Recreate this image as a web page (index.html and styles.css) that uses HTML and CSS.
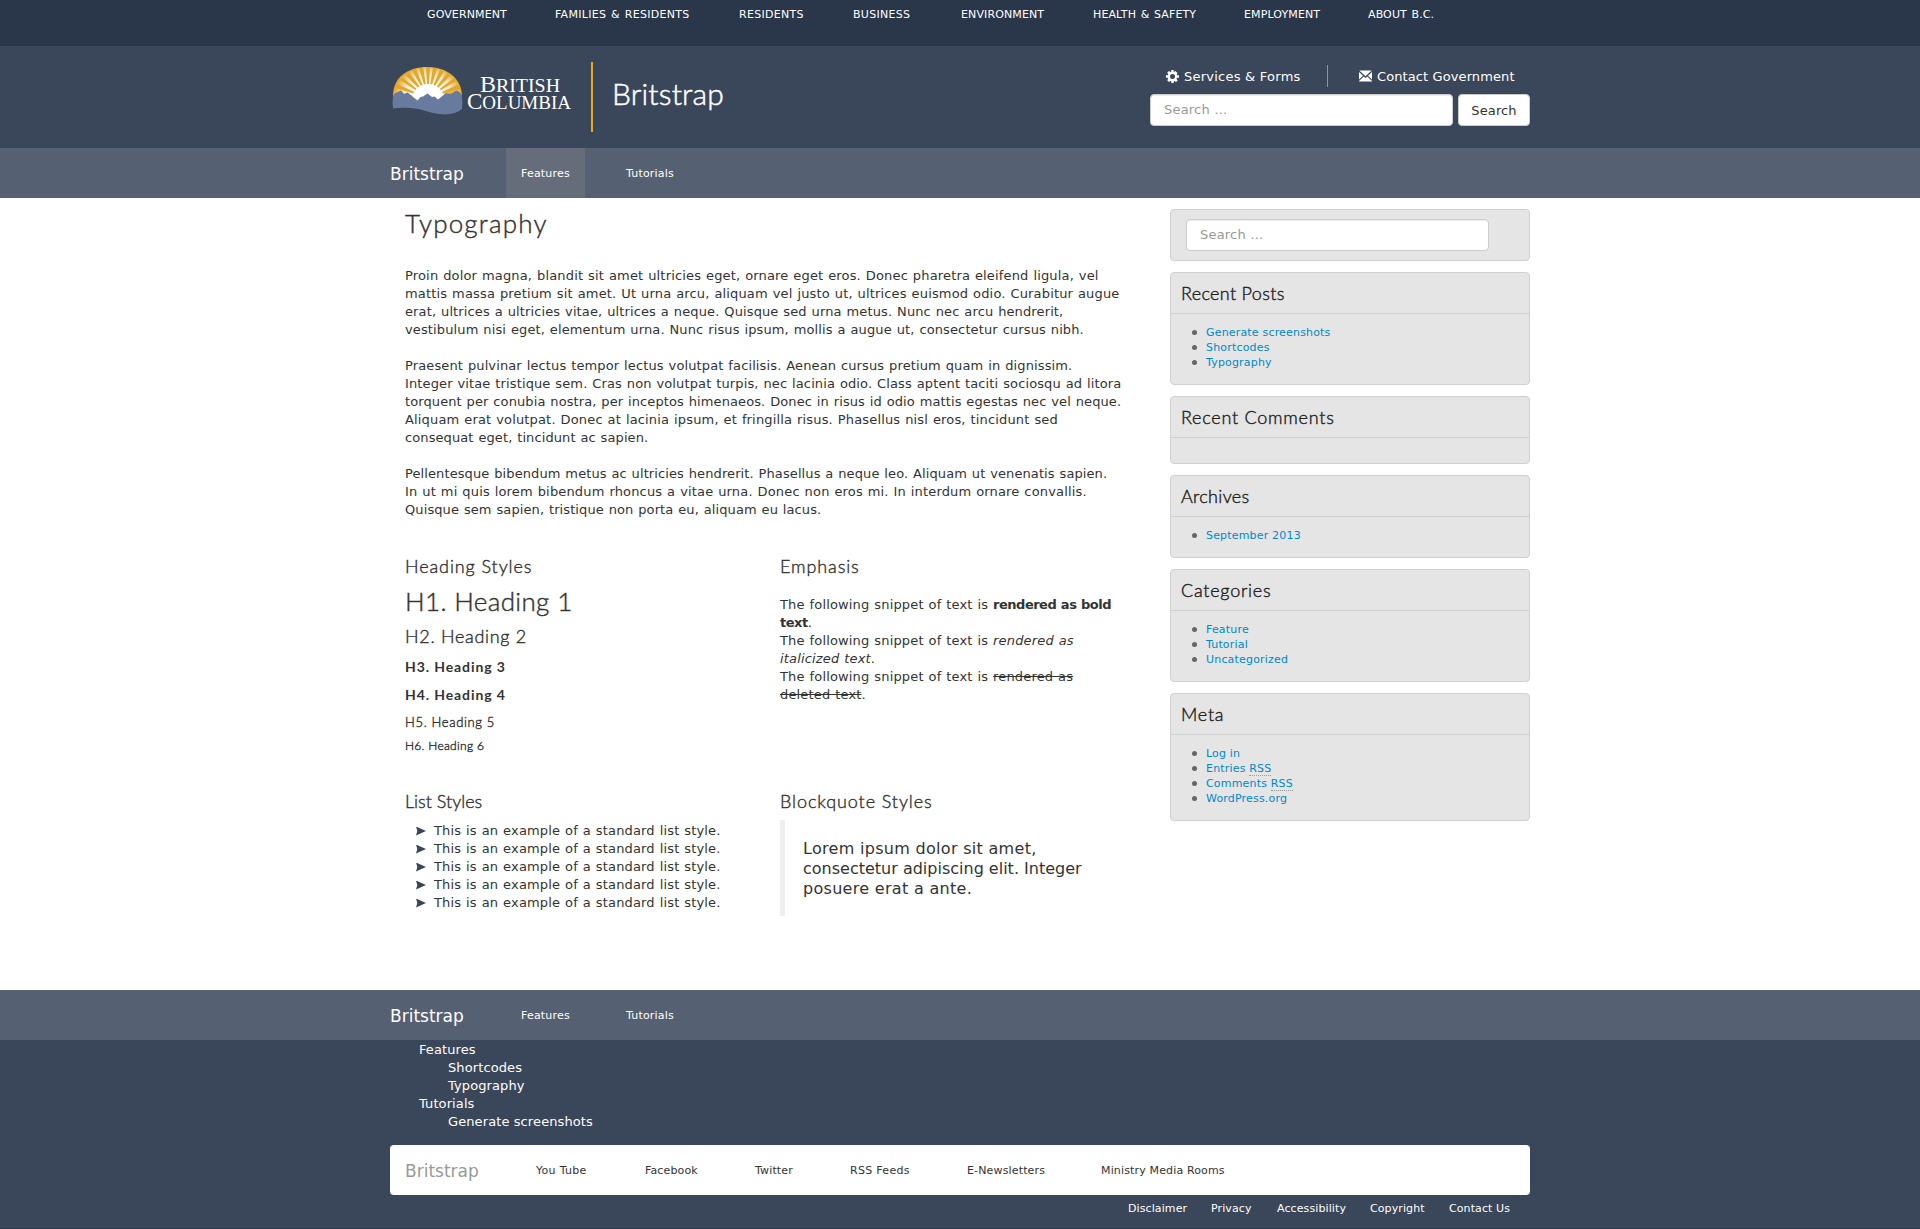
FILE: index.html
```html
<!DOCTYPE html>
<html lang="en">
<head>
<meta charset="utf-8">
<title>Typography | Britstrap</title>
<link rel="stylesheet" href="styles.css">
</head>
<body>
<nav class="topbar">
  <div class="container topbar-links">
    <a>GOVERNMENT</a><a class="loose">FAMILIES &amp; RESIDENTS</a><a class="loose">RESIDENTS</a><a class="loose">BUSINESS</a><a>ENVIRONMENT</a><a>HEALTH &amp; SAFETY</a><a>EMPLOYMENT</a><a>ABOUT B.C.</a>
  </div>
</nav>

<header class="header">
  <div class="container header-inner">
    <svg class="logo" width="184" height="54" viewBox="0 0 184 54" aria-label="British Columbia">
      <defs>
        <radialGradient id="glow" gradientUnits="userSpaceOnUse" cx="38" cy="36" r="33">
          <stop offset=".45" stop-color="#fff"/>
          <stop offset=".75" stop-color="#fff" stop-opacity=".7"/>
          <stop offset="1" stop-color="#fff" stop-opacity=".1"/>
        </radialGradient>
      </defs>
      <path d="M3 34C3 15 18 5 37.500 5S71 16 72 33L60 38H15Z" fill="#e3a82b"/>
      <g fill="url(#glow)">
        <path d="M38 36L4 31L5.500 26ZM38 36L7 22L10 18ZM38 36L12 15L15 12.500ZM38 36L19 10L22 8.500ZM38 36L26 7L29 6ZM38 36L33 5L36 5ZM38 36L40 5L43 5.500ZM38 36L47 6.500L50 7.500ZM38 36L54 9L57 11ZM38 36L61 13L64 16ZM38 36L66 19L68.500 22.500ZM38 36L70 27L71.500 31Z"/>
        <path d="M22 37A16 15 0 0 1 54 37L44 40H28Z" fill="#fff"/>
      </g>
      <path d="M3 34L5.500 31L8 30L11 28.500L14 32L17.500 30.500L27.500 38.500L30.500 35L33 34.500L37.500 31.500L42 35L44.500 34.500L48 37.500L56 31L61 31.500L66 28.500L68 29L71.500 32Q73 40 72 47Q64 54 49 52Q41 51 34 48.500Q21 44.500 3 46.500Q2 40 3 34Z" fill="#687a9e"/>
      <path d="M56 31L59.500 32L63 31L66 28.500L62 29.500Z" fill="#e3a82b"/>
      <g class="logo-text" fill="#fff">
        <text x="90" y="29.500" textLength="80" lengthAdjust="spacingAndGlyphs"><tspan class="cap">B</tspan>RITISH</text>
        <text x="77" y="47" textLength="104" lengthAdjust="spacingAndGlyphs"><tspan class="cap">C</tspan>OLUMBIA</text>
      </g>
    </svg>
    <div class="site-title">Britstrap</div>
    <div class="header-tools">
      <div class="quick">
        <a class="quick-services"><svg width="13" height="13" viewBox="0 0 13 13"><g fill="#fff"><path fill-rule="evenodd" d="M5.300 0H7.700V2.200L9.300 .9L11.500 3L10.800 4.300L11 5.300H13V7.700H11L10.500 8.900L11.700 10.400L10 12L8.600 11L7.700 11.300V13H5.300V11.300L4.300 11L3 12L1.200 10.300L2.200 8.800L1.900 7.700H0V5.300H1.900L2.200 4.200L1.200 2.700L3 1L4.400 2L5.300 1.700ZM6.500 4A2.500 2.500 0 1 0 6.500 9A2.500 2.500 0 1 0 6.500 4Z"/></g></svg>Services &amp; Forms</a>
        <a class="quick-contact"><svg width="13" height="12" viewBox="0 0 13 12"><path fill="#fff" d="M.3 .5H12.700L6.500 6.300ZM0 2L4 5.700L0 9.500ZM13 2L9 5.700L13 9.500ZM0 11.500V11L4.700 6.400L6.500 8L8.300 6.400L13 11V11.500Z"/></svg>Contact Government</a>
      </div>
      <form class="header-search">
        <input class="field" type="text" placeholder="Search …">
        <button class="btn" type="button">Search</button>
      </form>
    </div>
  </div>
</header>

<nav class="navbar">
  <div class="container navbar-inner">
    <a class="brand">Britstrap</a><a class="tab active">Features</a><a class="tab">Tutorials</a>
  </div>
</nav>

<div class="container page">
  <main class="content">
    <h1 class="title">Typography</h1>
    <p class="copy wide">Proin dolor magna, blandit sit amet ultricies eget, ornare eget eros. Donec pharetra eleifend ligula, vel<br>mattis massa pretium sit amet. Ut urna arcu, aliquam vel justo ut, ultrices euismod odio. Curabitur augue<br><span class="close">erat, ultrices a ultricies vitae, ultrices a neque. Quisque sed urna metus. Nunc nec arcu hendrerit,<br>vestibulum nisi eget, elementum urna. Nunc risus ipsum, mollis a augue ut, consectetur cursus nibh.</span></p>
    <p class="copy wide"><span class="close">Praesent pulvinar lectus tempor lectus volutpat facilisis. Aenean cursus pretium quam in dignissim.<br>Integer vitae tristique sem. Cras non volutpat turpis, nec lacinia odio. Class aptent taciti sociosqu ad litora</span><br><span class="closer">torquent per conubia nostra, per inceptos himenaeos. Donec in risus id odio mattis egestas nec vel neque.</span><br>Aliquam erat volutpat. Donec at lacinia ipsum, et fringilla risus. Phasellus nisl eros, tincidunt sed<br><span class="closer">consequat eget, tincidunt ac sapien.</span></p>
    <p class="copy wide"><span class="closer">Pellentesque bibendum metus ac ultricies hendrerit. Phasellus a neque leo. Aliquam ut venenatis sapien.</span><br>In ut mi quis lorem bibendum rhoncus a vitae urna. Donec non eros mi. In interdum ornare convallis.<br><span class="closer">Quisque sem sapien, tristique non porta eu, aliquam eu lacus.</span></p>

    <div class="samples">
      <section class="headings">
        <h2 class="h2">Heading Styles</h2>
        <h1 class="h1">H1. Heading 1</h1>
        <h2 class="h2 second">H2. Heading 2</h2>
        <h3 class="h3">H3. Heading 3</h3>
        <h4 class="h3">H4. Heading 4</h4>
        <h5 class="h5">H5. Heading 5</h5>
        <h6 class="h6">H6. Heading 6</h6>
      </section>
      <section>
        <h2 class="h2">Emphasis</h2>
        <p class="copy emphasis">The following snippet of text is <b>rendered as bold<br>text</b>.<br>The following snippet of text is <em>rendered as<br>italicized text</em>.<br>The following snippet of text is <del>rendered as<br>deleted text</del>.</p>
      </section>
      <section>
        <h2 class="h2 snug">List Styles</h2>
        <ul class="arrows copy">
          <li>This is an example of a standard list style.</li>
          <li>This is an example of a standard list style.</li>
          <li>This is an example of a standard list style.</li>
          <li>This is an example of a standard list style.</li>
          <li>This is an example of a standard list style.</li>
        </ul>
      </section>
      <section>
        <h2 class="h2">Blockquote Styles</h2>
        <blockquote class="quote"><span class="loose">Lorem ipsum dolor sit amet,</span><br>consectetur adipiscing elit. Integer<br><span class="loose">posuere erat a ante.</span></blockquote>
      </section>
    </div>
  </main>

  <aside class="sidebar">
    <div class="widget widget-search"><input class="field" type="text" placeholder="Search …"></div>
    <div class="widget">
      <h3 class="widget-title tight">Recent Posts</h3>
      <ul class="links"><li><a>Generate screenshots</a></li><li><a>Shortcodes</a></li><li><a>Typography</a></li></ul>
    </div>
    <div class="widget">
      <h3 class="widget-title">Recent Comments</h3>
      <ul class="links"></ul>
    </div>
    <div class="widget">
      <h3 class="widget-title tight">Archives</h3>
      <ul class="links"><li><a>September 2013</a></li></ul>
    </div>
    <div class="widget">
      <h3 class="widget-title">Categories</h3>
      <ul class="links"><li><a>Feature</a></li><li><a>Tutorial</a></li><li><a>Uncategorized</a></li></ul>
    </div>
    <div class="widget">
      <h3 class="widget-title">Meta</h3>
      <ul class="links"><li><a>Log in</a></li><li><a>Entries <abbr>RSS</abbr></a></li><li><a>Comments <abbr>RSS</abbr></a></li><li><a>WordPress.org</a></li></ul>
    </div>
  </aside>
</div>

<footer class="footer">
  <nav class="navbar">
    <div class="container navbar-inner">
      <a class="brand">Britstrap</a><a class="tab">Features</a><a class="tab">Tutorials</a>
    </div>
  </nav>
  <div class="container">
    <ul class="sitemap">
      <li>Features<ul><li>Shortcodes</li><li>Typography</li></ul></li>
      <li>Tutorials<ul><li>Generate screenshots</li></ul></li>
    </ul>
    <div class="social">
      <a class="brand">Britstrap</a><a class="loose">You Tube</a><a>Facebook</a><a>Twitter</a><a class="loose">RSS Feeds</a><a>E-Newsletters</a><a>Ministry Media Rooms</a>
    </div>
    <div class="legal"><a>Disclaimer</a><a>Privacy</a><a>Accessibility</a><a>Copyright</a><a>Contact Us</a></div>
  </div>
</footer>
</body>
</html>
```
FILE: styles.css
```css
* { box-sizing: border-box; }
body {
  margin: 0;
  background: #fff;
  color: #333;
  font: 13px/18px "DejaVu Sans", sans-serif;
}
h1, h2, h3, h4, h5, h6, p, ul, blockquote { margin: 0; padding: 0; }
ul { list-style: none; }
.container { width: 1140px; margin: 0 auto; }

.topbar { height: 46px; background: #2a3649; color: #fff; }
.topbar-links {
  display: grid;
  grid-template-columns: 128px 184px 114px 108px 132px 151px 124px 100px;
  padding: 6px 0 0 37px;
  font-size: 11px;
  letter-spacing: .12px;
  word-spacing: 1px;
  white-space: nowrap;
}
.loose { letter-spacing: .3px; }

.header { height: 102px; background: #3a4659; color: #fff; }
.header-inner { display: flex; align-items: flex-start; height: 102px; }
.logo { margin: 16px 0 0; display: block; }
.logo-text { font: 19px "Liberation Serif", serif; }
.logo-text .cap { font-size: 23px; }
.site-title {
  height: 70px;
  margin: 16px 0 0 17px;
  padding-left: 19px;
  border-left: 2px solid #e3a82b;
  font: 300 30px/62px Lato, sans-serif;
  letter-spacing: .15px;
  -webkit-text-stroke: .5px;
}
.header-tools { width: 380px; margin: 19px 0 0 auto; }
.quick { display: flex; height: 22px; line-height: 21px; letter-spacing: .1px; }
.quick a { display: flex; align-items: center; gap: 5px; }
.quick-services { width: 178px; padding-left: 16px; border-right: 1px solid #8d939c; letter-spacing: .24px; }
.quick-contact { padding-left: 31px; }
.header-search { display: flex; gap: 5px; margin-top: 7px; }
.field {
  width: 303px;
  height: 32px;
  padding: 0 13px 2px;
  border: 1px solid #ccc;
  border-radius: 4px;
  background: #fff;
  box-shadow: inset 0 1px 1px rgba(0, 0, 0, .075);
  color: #333;
  font: inherit;
  letter-spacing: .2px;
}
.field::placeholder { color: #999; opacity: 1; }
.btn {
  width: 72px;
  height: 32px;
  padding: 2px 0 0;
  border: 1px solid #ccc;
  border-radius: 4px;
  background: #fff;
  color: #333;
  font: inherit;
  letter-spacing: .1px;
}

.navbar { background: #566073; color: #fff; }
.navbar-inner { display: flex; height: 50px; line-height: 52px; }
.navbar .brand { width: 116px; }
.brand { font-size: 17px; line-height: 52px; }
.tab { width: 79px; margin-right: 26px; padding-left: 15px; font-size: 11px; letter-spacing: .2px; }
.tab.active { background: #656d7b; }

.page { display: flex; height: 792px; }
.content { width: 780px; padding: 8px 0 0 15px; }
.title, .h1, .h2, .h3, .h5, .h6, .widget-title { font-family: Lato, sans-serif; font-weight: 300; -webkit-text-stroke: .4px; }
.title { font-size: 26px; line-height: 34px; letter-spacing: 1.2px; margin-bottom: 27px; }
.copy { letter-spacing: .16px; word-spacing: .6px; white-space: nowrap; }
.close { letter-spacing: .125px; }
.closer { letter-spacing: .1px; }
.wide { margin-bottom: 18px; }
.samples { display: grid; grid-template-columns: 375px 345px; grid-template-rows: 235px auto; padding-top: 16px; }
.h2 { font-size: 18px; line-height: 26px; letter-spacing: .9px; }
.h2.second { letter-spacing: .7px; }
.h2.snug { letter-spacing: 0; }
.h1 { font-size: 26px; line-height: 34px; margin: 5px 0; letter-spacing: .35px; }
.h3 { font-size: 14px; line-height: 20px; margin: 8px 0; letter-spacing: .9px; font-weight: 700; -webkit-text-stroke: 0; }
.h5 { font-size: 13px; line-height: 18px; letter-spacing: .65px; margin-bottom: 6px; }
.h6 { font-size: 12px; line-height: 18px; letter-spacing: .3px; }
.emphasis { padding-top: 17px; }
.emphasis b { letter-spacing: -.5px; }
.arrows { padding-top: 8px; }
.arrows li { display: flex; align-items: center; padding-left: 11px; }
.arrows li::before {
  content: "";
  width: 10px;
  height: 9px;
  margin-right: 8px;
  background: #3a4659;
  clip-path: polygon(0 0, 100% 50%, 0 100%, 13% 50%);
}
.quote { height: 96px; margin-top: 6px; padding: 19px 0 0 18px; border-left: 5px solid #eee; font-size: 16px; line-height: 20px; white-space: nowrap; }

.sidebar { display: flex; flex-direction: column; gap: 11px; width: 360px; padding-top: 11px; }
.widget { border: 1px solid #d0d0d0; border-radius: 4px; background: #e5e5e5; }
.widget-search { height: 52px; padding: 9px 0 0 15px; }
.widget-title { height: 41px; padding-left: 10px; border-bottom: 1px solid #d0d0d0; font-size: 18px; line-height: 41px; letter-spacing: .75px; color: #222; }
.widget-title.tight { letter-spacing: .33px; }
.links { padding: 11px 0 14px 21px; color: #08c; font-size: 11px; line-height: 15px; letter-spacing: .18px; }
.links li { display: flex; align-items: center; }
.links li::before { content: ""; width: 5px; height: 5px; margin-right: 9px; border-radius: 50%; background: #666; }
.links abbr { border-bottom: 1px dotted #999; text-decoration: none; }

.footer { height: 239px; background: #3a4659; border-bottom: 1px solid #2a3649; color: #fff; }
.sitemap { height: 105px; padding-top: 1px; letter-spacing: .1px; }
.sitemap li { padding-left: 29px; }
.social {
  display: grid;
  grid-template-columns: 131px 109px 110px 95px 117px 134px auto;
  height: 50px;
  padding-left: 15px;
  border-radius: 4px;
  background: #fff;
  color: #333;
  font-size: 11px;
  line-height: 52px;
  letter-spacing: .15px;
}
.social .brand { color: #999; letter-spacing: 0; }
.legal { display: grid; grid-template-columns: 83px 66px 93px 79px 81px; justify-content: end; padding-top: 5px; font-size: 11px; letter-spacing: .1px; }
```
